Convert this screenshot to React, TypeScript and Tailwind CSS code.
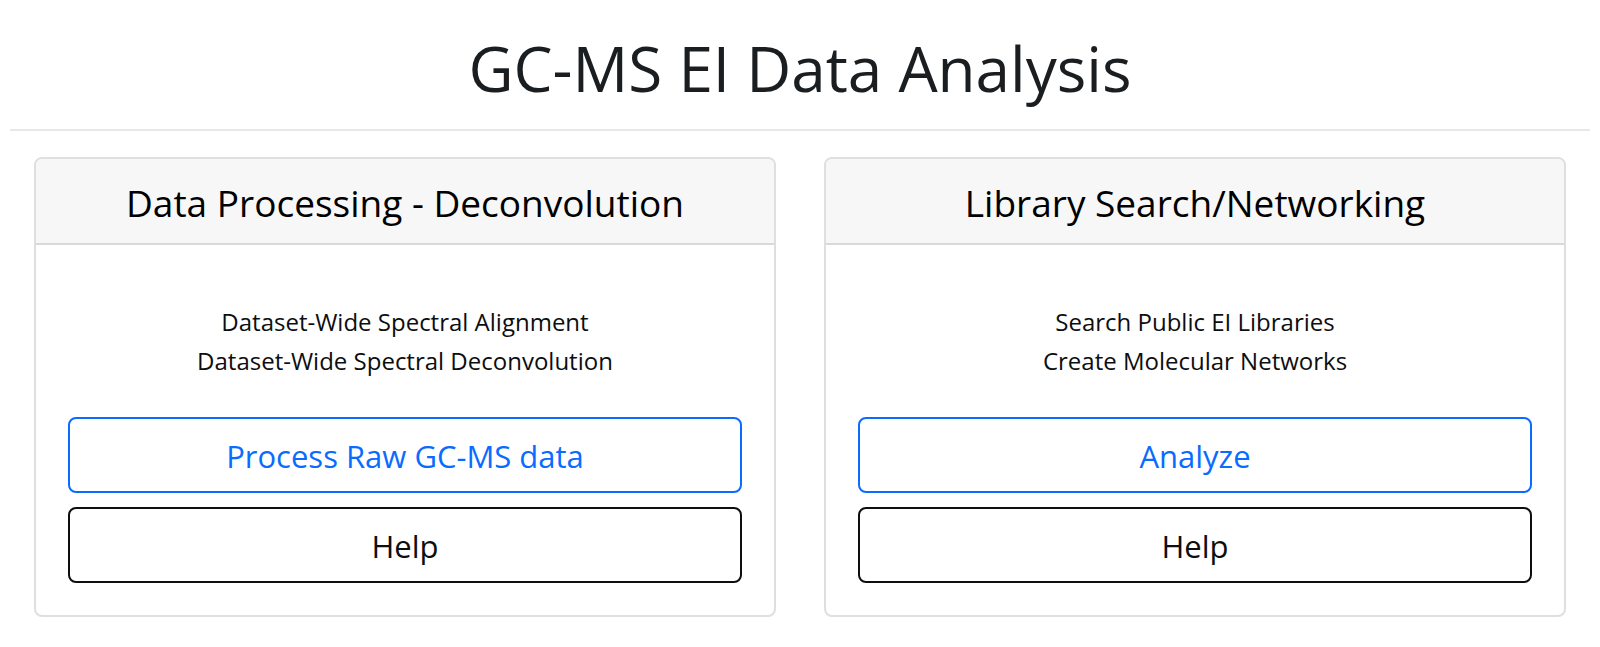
const cards = [
  {
    title: "Data Processing - Deconvolution",
    lines: ["Dataset-Wide Spectral Alignment", "Dataset-Wide Spectral Deconvolution"],
    action: "Process Raw GC-MS data",
  },
  {
    title: "Library Search/Networking",
    lines: ["Search Public EI Libraries", "Create Molecular Networks"],
    action: "Analyze",
  },
];

const buttonBase =
  "block w-full rounded-[8px] border-2 bg-white pt-[13px] pb-[11px] text-center text-[31px] leading-[48px]";

export default function App() {
  return (
    <main className="bg-white px-2.5 pt-[26px] pb-8 font-['Open_Sans',sans-serif] text-[#0c0e10]">
      <h1 className="text-center text-[62px] leading-[84px] text-[#1a1e21]">GC-MS EI Data Analysis</h1>
      <hr className="mt-[19px] border-t-2 border-[#e8e8e8]" />
      <div className="mt-[26px] grid grid-cols-2 gap-12 px-6">
        {cards.map((card) => (
          <section key={card.title} className="rounded-[8px] border-2 border-[#dfdfdf] text-center">
            <h2 className="rounded-t-[6px] border-b-2 border-[#d9d9d9] bg-[#f7f7f7] pt-[21px] pb-[17px] text-[37px] leading-[46px] text-black">
              {card.title}
            </h2>
            <div className="px-8 pt-[57px] pb-8">
              <p className="text-[24px] leading-[39px]">
                {card.lines[0]}
                <br />
                {card.lines[1]}
              </p>
              <div className="mt-[37px] flex flex-col gap-3.5">
                <button type="button" className={`${buttonBase} border-[#0a6cff] text-[#0a6cff]`}>
                  {card.action}
                </button>
                <button type="button" className={`${buttonBase} border-[#0c0e10]`}>
                  Help
                </button>
              </div>
            </div>
          </section>
        ))}
      </div>
    </main>
  );
}
